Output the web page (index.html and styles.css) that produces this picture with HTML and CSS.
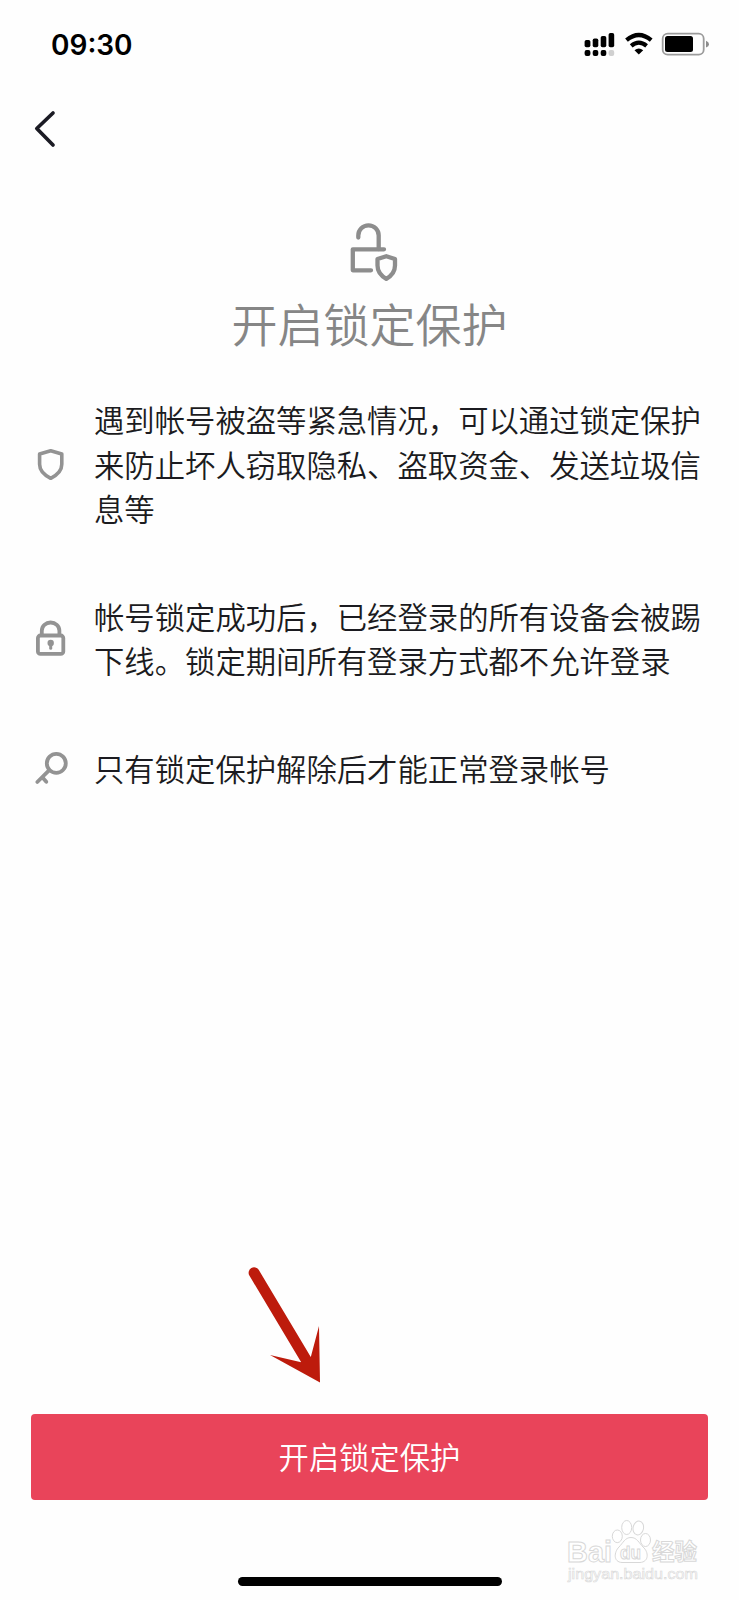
FILE: index.html
```
<!DOCTYPE html>
<html lang="zh-CN">
<head>
    <meta charset="UTF-8">
    <title>开启锁定保护</title>
    <link rel="stylesheet" href="styles.css">
</head>
<body>
<div id="app">
    <div class="status-bar">
        <span class="time">09:30</span>
        <svg class="status-icons" width="126" height="26" viewBox="584 31 126 26">
            <rect x="584.6" y="40" width="5.8" height="7.2" rx="1.8"/>
            <rect x="592.7" y="38.5" width="5.6" height="8.7" rx="1.8"/>
            <rect x="600.7" y="36" width="5.6" height="11.2" rx="1.8"/>
            <rect x="608.6" y="33" width="5.6" height="14.2" rx="1.8"/>
            <rect x="584.6" y="50" width="5.8" height="6" rx="2"/>
            <rect x="592.7" y="50" width="5.6" height="6" rx="2"/>
            <rect x="600.7" y="50" width="5.6" height="6" rx="2"/>
            <rect x="608.6" y="50" width="5.6" height="6" rx="2" fill="#d0d0d0"/>
            <path d="M626.5 40.2Q638.8 29.8 651.2 40.2M631.2 45.8Q638.8 39.4 646.6 45.8" fill="none" stroke="#000" stroke-width="4.2"/>
            <path d="M634.5 50.2Q638.8 46.8 643.2 50.2L638.8 54.6Z"/>
            <rect x="662.7" y="33.7" width="41" height="21" rx="5" fill="none" stroke="#9b9b9b" stroke-width="1.8"/>
            <rect x="665" y="36" width="28" height="16" rx="2.5"/>
            <path d="M706 40.8Q709 42 709 44.2T706 47.6Z" fill="#8c8c8c"/>
        </svg>
    </div>

    <div class="nav">
        <svg width="24" height="38" viewBox="32 110 24 38">
            <path d="M53 113L36.8 128.5L53 145" fill="none" stroke="#1b1b24" stroke-width="3.7" stroke-linecap="round" stroke-linejoin="round"/>
        </svg>
    </div>

    <div class="header">
        <svg width="50" height="60" viewBox="349 222 50 60" fill="none" stroke="#8d8d8d" stroke-width="4.3" stroke-linecap="round" stroke-linejoin="round">
            <path d="M358.3 237.5V235.5A10.2 10.2 0 0 1 378.7 235.5V249"/>
            <path d="M384 249.3H352.8V270.3H371"/>
            <path d="M386.3 256.2L395 259V265.5C395 272 391.2 276 386.3 278.8C381.4 276 377.5 272 377.5 265.5V259Z"/>
        </svg>
        <h1>开启锁定保护</h1>
    </div>

    <ul class="tips">
        <li>
            <svg width="34" height="38" viewBox="34 445 34 38" fill="none" stroke="#939393" stroke-width="3.6" stroke-linejoin="round">
                <path d="M50.7 450.7L61.8 454V464.3C61.8 470.5 57 475.2 50.7 478.3C44.4 475.2 39.6 470.5 39.6 464.3V454Z"/>
            </svg>
            <p>遇到帐号被盗等紧急情况，可以通过锁定保护<br>来防止坏人窃取隐私、盗取资金、发送垃圾信<br>息等</p>
        </li>
        <li>
            <svg width="34" height="38" viewBox="34 619 34 38" fill="none" stroke="#939393" stroke-width="3.8">
                <rect x="37.9" y="635.5" width="25.4" height="18.4" rx="2.5"/>
                <path d="M41.8 635V630.8A8.8 8.3 0 0 1 59.4 630.8V635"/>
                <circle cx="50.7" cy="643" r="3.2" fill="#939393" stroke="none"/>
                <path d="M50.7 643V648.3" stroke-linecap="round" stroke-width="3"/>
            </svg>
            <p>帐号锁定成功后，已经登录的所有设备会被踢<br>下线。锁定期间所有登录方式都不允许登录</p>
        </li>
        <li>
            <svg width="34" height="38" viewBox="34 749 34 38" fill="none" stroke="#939393" stroke-width="3.8" stroke-linecap="round">
                <circle cx="56.3" cy="763.3" r="9.5"/>
                <path d="M49.3 770.2L37.3 782M42.5 777.5L46.3 781.8"/>
            </svg>
            <p>只有锁定保护解除后才能正常登录帐号</p>
        </li>
    </ul>

    <button type="button" class="lock-button">开启锁定保护</button>
    <div class="home-indicator"></div>

    <svg class="arrow" width="100" height="140" viewBox="0 0 100 140">
        <path d="M19.2 25.3A5.5 5.5 0 0 1 28.7 19.8L80.8 107L89 76L90 132.5L40 105L71.2 112.2Z" fill="#bd1b0c"/>
    </svg>

    <svg class="watermark" width="140" height="70" viewBox="562 1516 140 70">
        <g fill="#fff" stroke="#d8d8d8">
            <ellipse cx="617.3" cy="1536.3" rx="5" ry="6.3"/>
            <ellipse cx="626.7" cy="1527.5" rx="5" ry="7"/>
            <ellipse cx="638.3" cy="1528" rx="5.2" ry="7" transform="rotate(12 638.3 1528)"/>
            <ellipse cx="645.5" cy="1540" rx="5" ry="6.5"/>
            <path d="M631 1537.5C625 1537.5 623 1543 619 1547C614 1552 613 1562 622 1562.5H640C649 1562 649 1552 643 1547C639 1543 637 1537.5 631 1537.5Z"/>
            <text class="brand" x="567" y="1561.5" font-size="30" textLength="45" lengthAdjust="spacingAndGlyphs">Bai</text>
            <text class="brand" x="620" y="1558.5" font-size="19" textLength="21" lengthAdjust="spacingAndGlyphs">du</text>
            <text class="brand" x="652" y="1559.5" font-size="23" textLength="45" lengthAdjust="spacingAndGlyphs">经验</text>
            <text class="site" x="568" y="1578.5" font-size="15" textLength="130" lengthAdjust="spacingAndGlyphs">jingyan.baidu.com</text>
        </g>
    </svg>
</div>
</body>
</html>
```
FILE: styles.css
```
* {
    box-sizing: border-box;
}
body {
    margin: 0;
    background-color: #fefefe;
    font-family: "Noto Sans CJK SC", sans-serif;
    font-weight: 350;
    color: #1b1b20;
}
#app {
    position: relative;
    width: 739px;
    height: 1600px;
    display: flex;
    flex-direction: column;
    overflow: hidden;
}
.status-bar {
    display: flex;
    justify-content: space-between;
    align-items: center;
    height: 88px;
    padding: 0 29px 0 51px;
}
.time {
    padding-top: 2px;
    font-family: Inter, sans-serif;
    font-size: 28px;
    font-weight: 600;
    color: #000;
}
.nav {
    display: flex;
    height: 82px;
    padding: 22px 32px;
}
.header {
    display: flex;
    flex-direction: column;
    align-items: center;
    padding: 52px 0 0 9px;
}
h1 {
    margin: 6px 9px 0 0;
    font-size: 46px;
    font-weight: 350;
    line-height: 68px;
    color: #868686;
}
.tips {
    display: flex;
    flex-direction: column;
    gap: 63px;
    margin: 41px 0 0;
    padding: 0 0 0 34px;
    list-style: none;
}
.tips li {
    display: flex;
    align-items: center;
    gap: 26px;
}
.tips p {
    margin: 0;
    font-size: 30.35px;
    line-height: 44.6px;
    white-space: nowrap;
}
.lock-button {
    height: 86px;
    margin: auto 31px 77px;
    padding: 0 0 3px;
    border: none;
    border-radius: 4px;
    background-color: #e9445a;
    color: #fff;
    font-family: inherit;
    font-size: 30.3px;
    font-weight: 350;
    cursor: pointer;
}
.home-indicator {
    flex-shrink: 0;
    width: 264px;
    height: 9px;
    margin: 0 auto 14px;
    border-radius: 5px;
    background-color: #000;
}
.arrow {
    position: absolute;
    left: 230px;
    top: 1250px;
}
.watermark {
    position: absolute;
    left: 562px;
    top: 1516px;
}
.brand {
    font-family: "Liberation Sans", "Noto Sans CJK SC", sans-serif;
    font-weight: 700;
}
.site {
    font-family: "Liberation Sans", sans-serif;
    stroke-width: 0.6px;
}
```
